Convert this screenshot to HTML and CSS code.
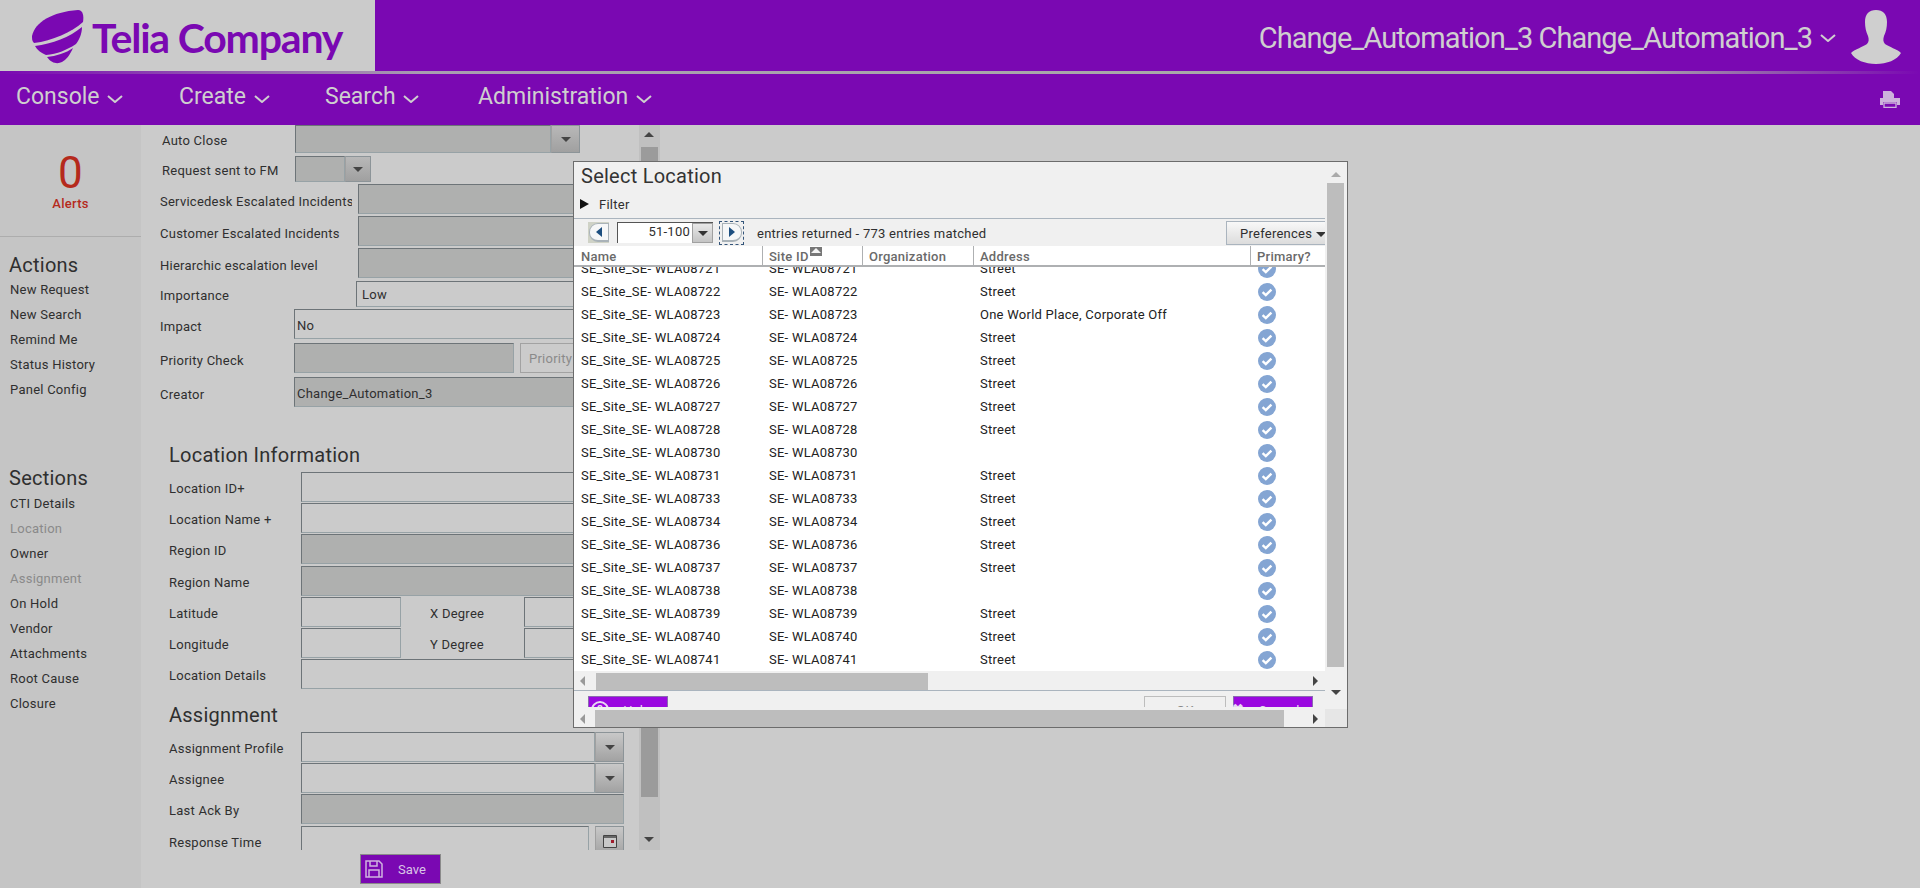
FILE: index.html
```html
<!DOCTYPE html>
<html lang="en">
<head>
    <meta charset="UTF-8">
    <title>Select Location</title>
    <link rel="stylesheet" href="styles.css">
</head>
<body>
<svg class="defs" aria-hidden="true">
    <symbol id="chevron" viewBox="0 0 16 8"><path d="M1 1l7 6 7-6" fill="none" stroke="currentColor" stroke-width="2"/></symbol>
    <symbol id="check" viewBox="0 0 18 18"><circle cx="9" cy="9" r="9" fill="#84a5d3"/><path d="M4.6 9.2l3.2 3 5.6-5.6" fill="none" stroke="#fff" stroke-width="2.4"/></symbol>
</svg>

<header class="topbar">
    <div class="logo">
        <svg class="logo-mark" viewBox="0 0 52 55">
            <path d="M0 26C3 12 20 2 46 0c5 0 6 6 5 12C40 22 20 31 2 33c-2-2-2-4-2-7z" fill="#7a08b2"/>
            <path d="M3 36c17-2 35-9 47-19 0 7-3 13-6 17-9 6-19 10-30 11-5-2-9-5-11-9z" fill="#7a08b2"/>
            <path d="M15 47c9-1 19-4 26-9-3 7-7 12-11 14-4 2-10 2-15-5z" fill="#7a08b2"/>
        </svg>
        <span class="logo-text">Telia Company</span>
    </div>
    <div class="user">
        <span class="user-name">Change_Automation_3 Change_Automation_3</span>
        <svg class="chevron-sm"><use href="#chevron"/></svg>
        <svg class="avatar" viewBox="0 0 50 54">
            <path d="M25 0c7 0 11 4 11 12 0 5-1 10-3 14-1 3-1 6 1 8 4 3 12 5 16 9-4 7-14 11-25 11S4 50 0 43c4-4 12-6 16-9 2-2 2-5 1-8-2-4-3-9-3-14C14 4 18 0 25 0z" fill="#cfcfcf"/>
        </svg>
    </div>
</header>
<div class="rule"></div>

<nav class="menu">
    <a class="menu-item console">Console <svg class="chevron"><use href="#chevron"/></svg></a>
    <a class="menu-item create">Create <svg class="chevron"><use href="#chevron"/></svg></a>
    <a class="menu-item search">Search <svg class="chevron"><use href="#chevron"/></svg></a>
    <a class="menu-item admin">Administration <svg class="chevron"><use href="#chevron"/></svg></a>
    <svg class="printer" viewBox="0 0 20 17">
        <path d="M3 0h8l3 3v4H3z" fill="#cdb3dc"/>
        <path d="M0 7h20v7h-3v-3H3v3H0z" fill="#cdb3dc"/>
        <path d="M4 12h12v4.500H4z" fill="none" stroke="#cdb3dc" stroke-width="1.300"/>
    </svg>
</nav>

<main class="content">
    <aside class="sidebar">
        <div class="alerts">
            <div class="alerts-count">0</div>
            <div class="alerts-label">Alerts</div>
        </div>
        <h2 class="side-title">Actions</h2>
        <ul class="side-list">
            <li>New Request</li>
            <li>New Search</li>
            <li>Remind Me</li>
            <li>Status History</li>
            <li>Panel Config</li>
        </ul>
        <h2 class="side-title sections">Sections</h2>
        <ul class="side-list">
            <li>CTI Details</li>
            <li class="off">Location</li>
            <li>Owner</li>
            <li class="off">Assignment</li>
            <li>On Hold</li>
            <li>Vendor</li>
            <li>Attachments</li>
            <li>Root Cause</li>
            <li>Closure</li>
        </ul>
    </aside>

    <section class="panel">
        <div class="form">
            <div class="row row-first">
                <label class="lbl lbl-close">Auto Close</label>
                <div class="field off"></div><div class="drop off-drop"><i></i></div>
            </div>
            <div class="row row-fm">
                <label class="lbl lbl-close">Request sent to FM</label>
                <div class="field off small"></div><div class="drop off-drop"><i></i></div>
            </div>
            <div class="row gap-2">
                <label class="lbl lbl-esc">Servicedesk Escalated Incidents</label>
                <div class="field off"></div>
            </div>
            <div class="row gap-2">
                <label class="lbl lbl-esc">Customer Escalated Incidents</label>
                <div class="field off"></div>
            </div>
            <div class="row gap-2">
                <label class="lbl lbl-esc">Hierarchic escalation level</label>
                <div class="field off"></div>
            </div>
            <div class="row row-low">
                <label class="lbl lbl-low">Importance</label>
                <div class="field">Low</div>
            </div>
            <div class="row gap-2">
                <label class="lbl lbl-close-b">Impact</label>
                <div class="field tight">No</div>
            </div>
            <div class="row gap-4">
                <label class="lbl lbl-close-b">Priority Check</label>
                <div class="field off prio"></div>
                <div class="prio-btn">Priority</div>
            </div>
            <div class="row gap-4">
                <label class="lbl lbl-close-b">Creator</label>
                <div class="field off tight">Change_Automation_3</div>
            </div>

            <h3 class="group group-loc">Location Information</h3>
            <div class="row block">
                <label class="lbl lbl-loc">Location ID+</label>
                <div class="field"></div>
            </div>
            <div class="row block gap-1">
                <label class="lbl lbl-loc">Location Name +</label>
                <div class="field"></div>
            </div>
            <div class="row block gap-1">
                <label class="lbl lbl-loc">Region ID</label>
                <div class="field off"></div>
            </div>
            <div class="row block gap-2">
                <label class="lbl lbl-loc">Region Name</label>
                <div class="field off"></div>
            </div>
            <div class="row block gap-1">
                <label class="lbl lbl-loc">Latitude</label>
                <div class="field coord"></div>
                <label class="lbl lbl-deg">X Degree</label>
                <div class="field"></div>
            </div>
            <div class="row block gap-1">
                <label class="lbl lbl-loc">Longitude</label>
                <div class="field coord"></div>
                <label class="lbl lbl-deg">Y Degree</label>
                <div class="field"></div>
            </div>
            <div class="row block gap-1">
                <label class="lbl lbl-loc">Location Details</label>
                <div class="field"></div>
            </div>

            <h3 class="group group-assign">Assignment</h3>
            <div class="row block wide">
                <label class="lbl lbl-loc">Assignment Profile</label>
                <div class="field"></div><div class="drop"><i></i></div>
            </div>
            <div class="row block wide gap-1">
                <label class="lbl lbl-loc">Assignee</label>
                <div class="field"></div><div class="drop"><i></i></div>
            </div>
            <div class="row block wide gap-1">
                <label class="lbl lbl-loc">Last Ack By</label>
                <div class="field off"></div>
            </div>
            <div class="row block wide gap-2">
                <label class="lbl lbl-loc">Response Time</label>
                <div class="field"></div>
                <div class="drop cal">
                    <svg viewBox="0 0 14 13" width="14" height="13">
                        <path d="M.5.5h13v12H.5z" fill="#c9c9c9" stroke="#444"/>
                        <path d="M1 1h12v2H1z" fill="#666"/>
                        <path d="M8 5h3v3H8z" fill="#a01c2c"/>
                    </svg>
                </div>
            </div>
        </div>
        <div class="form-scroll">
            <i class="up"></i>
            <div class="form-thumb"></div>
            <i class="down"></i>
        </div>
    </section>

    <button class="save">
        <svg viewBox="0 0 18 18" width="18" height="18">
            <path d="M1 1h13l3 3v13H1z" fill="none" stroke="#d0b3e0" stroke-width="1.500"/>
            <path d="M5 1v5h7V1M4 17v-7h10v7" fill="none" stroke="#d0b3e0" stroke-width="1.500"/>
        </svg>
        <span>Save</span>
    </button>
</main>

<!-- dialog lies over the form -->
<div class="dialog">
    <div class="dialog-body">
        <div class="dialog-title">Select Location</div>
        <div class="filter"><i class="arrow-right"></i>Filter</div>
        <div class="toolbar">
            <div class="page-btn prev"><span class="knob"><i class="tri-left"></i></span></div>
            <div class="page-select">
                <span class="page-value">51-100</span>
                <span class="page-drop"><i></i></span>
            </div>
            <div class="page-btn next"><span class="knob"><i class="tri-right"></i></span></div>
            <span class="count">entries returned - 773 entries matched</span>
            <div class="prefs">Preferences <i></i></div>
        </div>
        <div class="thead">
            <div class="th c-name">Name</div>
            <div class="th c-site">Site ID<i class="sort"></i></div>
            <div class="th c-org">Organization</div>
            <div class="th c-addr">Address</div>
            <div class="th c-prim">Primary?</div>
        </div>
        <div class="tlist">
            <div class="tscroll">
                <div class="tr"><span class="c-name">SE_Site_SE- WLA08721</span><span class="c-site">SE- WLA08721</span><span class="c-org"></span><span class="c-addr">Street</span><span class="c-prim"><svg class="ok"><use href="#check"/></svg></span></div>
                <div class="tr"><span class="c-name">SE_Site_SE- WLA08722</span><span class="c-site">SE- WLA08722</span><span class="c-org"></span><span class="c-addr">Street</span><span class="c-prim"><svg class="ok"><use href="#check"/></svg></span></div>
                <div class="tr"><span class="c-name">SE_Site_SE- WLA08723</span><span class="c-site">SE- WLA08723</span><span class="c-org"></span><span class="c-addr">One World Place, Corporate Off</span><span class="c-prim"><svg class="ok"><use href="#check"/></svg></span></div>
                <div class="tr"><span class="c-name">SE_Site_SE- WLA08724</span><span class="c-site">SE- WLA08724</span><span class="c-org"></span><span class="c-addr">Street</span><span class="c-prim"><svg class="ok"><use href="#check"/></svg></span></div>
                <div class="tr"><span class="c-name">SE_Site_SE- WLA08725</span><span class="c-site">SE- WLA08725</span><span class="c-org"></span><span class="c-addr">Street</span><span class="c-prim"><svg class="ok"><use href="#check"/></svg></span></div>
                <div class="tr"><span class="c-name">SE_Site_SE- WLA08726</span><span class="c-site">SE- WLA08726</span><span class="c-org"></span><span class="c-addr">Street</span><span class="c-prim"><svg class="ok"><use href="#check"/></svg></span></div>
                <div class="tr"><span class="c-name">SE_Site_SE- WLA08727</span><span class="c-site">SE- WLA08727</span><span class="c-org"></span><span class="c-addr">Street</span><span class="c-prim"><svg class="ok"><use href="#check"/></svg></span></div>
                <div class="tr"><span class="c-name">SE_Site_SE- WLA08728</span><span class="c-site">SE- WLA08728</span><span class="c-org"></span><span class="c-addr">Street</span><span class="c-prim"><svg class="ok"><use href="#check"/></svg></span></div>
                <div class="tr"><span class="c-name">SE_Site_SE- WLA08730</span><span class="c-site">SE- WLA08730</span><span class="c-org"></span><span class="c-addr"></span><span class="c-prim"><svg class="ok"><use href="#check"/></svg></span></div>
                <div class="tr"><span class="c-name">SE_Site_SE- WLA08731</span><span class="c-site">SE- WLA08731</span><span class="c-org"></span><span class="c-addr">Street</span><span class="c-prim"><svg class="ok"><use href="#check"/></svg></span></div>
                <div class="tr"><span class="c-name">SE_Site_SE- WLA08733</span><span class="c-site">SE- WLA08733</span><span class="c-org"></span><span class="c-addr">Street</span><span class="c-prim"><svg class="ok"><use href="#check"/></svg></span></div>
                <div class="tr"><span class="c-name">SE_Site_SE- WLA08734</span><span class="c-site">SE- WLA08734</span><span class="c-org"></span><span class="c-addr">Street</span><span class="c-prim"><svg class="ok"><use href="#check"/></svg></span></div>
                <div class="tr"><span class="c-name">SE_Site_SE- WLA08736</span><span class="c-site">SE- WLA08736</span><span class="c-org"></span><span class="c-addr">Street</span><span class="c-prim"><svg class="ok"><use href="#check"/></svg></span></div>
                <div class="tr"><span class="c-name">SE_Site_SE- WLA08737</span><span class="c-site">SE- WLA08737</span><span class="c-org"></span><span class="c-addr">Street</span><span class="c-prim"><svg class="ok"><use href="#check"/></svg></span></div>
                <div class="tr"><span class="c-name">SE_Site_SE- WLA08738</span><span class="c-site">SE- WLA08738</span><span class="c-org"></span><span class="c-addr"></span><span class="c-prim"><svg class="ok"><use href="#check"/></svg></span></div>
                <div class="tr"><span class="c-name">SE_Site_SE- WLA08739</span><span class="c-site">SE- WLA08739</span><span class="c-org"></span><span class="c-addr">Street</span><span class="c-prim"><svg class="ok"><use href="#check"/></svg></span></div>
                <div class="tr"><span class="c-name">SE_Site_SE- WLA08740</span><span class="c-site">SE- WLA08740</span><span class="c-org"></span><span class="c-addr">Street</span><span class="c-prim"><svg class="ok"><use href="#check"/></svg></span></div>
                <div class="tr"><span class="c-name">SE_Site_SE- WLA08741</span><span class="c-site">SE- WLA08741</span><span class="c-org"></span><span class="c-addr">Street</span><span class="c-prim"><svg class="ok"><use href="#check"/></svg></span></div>
            </div>
        </div>
        <div class="hscroll inner">
            <i class="sl"></i><div class="hthumb thumb-inner"></div><i class="sr"></i>
        </div>
        <div class="dialog-foot">
            <div class="foot-btn help"><b class="q">?</b>Help</div>
            <div class="foot-spacer"></div>
            <div class="foot-btn okay">OK</div>
            <div class="foot-btn cancel"><b class="x">&#10006;</b>Cancel</div>
        </div>
    </div>
    <div class="vscroll">
        <i class="vu"></i>
        <div class="vthumb"></div>
        <i class="vd"></i>
    </div>
    <div class="hscroll outer">
        <i class="sl"></i><div class="hthumb thumb-outer"></div><i class="sr"></i>
    </div>
    <div class="corner"></div>
</div>
</body>
</html>
```

FILE: styles.css
```css
html, body {
    margin: 0;
    padding: 0;
}

body {
    width: 1920px;
    height: 888px;
    overflow: hidden;
    position: relative;
    background-color: #cbcbcb;
    color: #2f2f2f;
    font-family: Roboto, "Liberation Sans", sans-serif;
    font-size: 13px;
    letter-spacing: 0.25px;
}

.defs {
    display: none;
}

/* header */

.topbar {
    height: 71px;
    display: flex;
    justify-content: space-between;
    background-color: #7a08b2;
}

.logo {
    width: 375px;
    display: flex;
    align-items: center;
    padding-left: 32px;
    box-sizing: border-box;
    background-color: #cbcbcb;
}

.logo-mark {
    width: 52px;
    height: 55px;
    flex: none;
    margin-top: 3px;
}

.logo-text {
    margin: 4px 0 0 8px;
    color: #7a08b2;
    font-family: Lato, sans-serif;
    font-size: 41px;
    font-weight: 700;
    letter-spacing: -1.2px;
    line-height: 1;
    white-space: nowrap;
}

.user {
    display: flex;
    align-items: center;
    padding-right: 19px;
    color: #cfcfcf;
}

.user-name {
    margin-top: 5px;
    font-size: 29px;
    letter-spacing: -0.95px;
}

.chevron-sm {
    width: 16px;
    height: 8px;
    margin: 4px 0 0 8px;
}

.avatar {
    width: 50px;
    height: 54px;
    margin: 2px 0 0 15px;
}

.rule {
    height: 3px;
    background: linear-gradient(to right, #7a08b2 0, #a89db0 22%, #a8a8a8 60%, #a8a8a8 85%, #7a08b2 100%);
}

.menu {
    height: 51px;
    display: flex;
    align-items: center;
    position: relative;
    background-color: #7a08b2;
    color: #cfcfcf;
    letter-spacing: 0;
}

.menu-item {
    margin-bottom: 6px;
    font-size: 23px;
    white-space: nowrap;
}

.console { margin-left: 16px; width: 163px; }
.create { width: 146px; }
.search { width: 153px; }

.chevron {
    width: 16px;
    height: 8px;
    margin-left: 2px;
    vertical-align: 1px;
}

.printer {
    width: 20px;
    height: 17px;
    margin-left: auto;
    margin-right: 20px;
}

/* left side */

.content {
    height: 763px;
    display: flex;
    position: relative;
}

.sidebar {
    width: 141px;
    flex: none;
    background-color: #c5c5c5;
}

.alerts {
    height: 112px;
    border-bottom: 1px solid #adadad;
    text-align: center;
    box-sizing: border-box;
}

.alerts-count {
    padding-top: 23px;
    color: #b52a1c;
    font-size: 44px;
    line-height: 50px;
}

.alerts-label {
    margin-top: -2px;
    color: #b52a1c;
    font-size: 13px;
    font-weight: 500;
    line-height: 16px;
}

.side-title {
    margin: 16px 0 0 9px;
    font-size: 20px;
    font-weight: 400;
    line-height: 24px;
}

.sections {
    margin-top: 64px;
    margin-bottom: 1px;
}

.side-list {
    list-style: none;
    margin: 0;
    padding: 0 0 0 10px;
}

.side-list li {
    height: 25px;
    line-height: 25px;
}

.side-list li.off {
    color: #8a8a8a;
}

/* form */

.panel {
    width: 519px;
    height: 725px;
    display: flex;
    flex: none;
    overflow: hidden;
}

.form {
    width: 498px;
    flex: none;
    padding-left: 19px;
    box-sizing: border-box;
}

.row {
    height: 30px;
    display: flex;
    width: 420px;
}

.row-first { height: 28px; }
.row-fm { height: 26px; margin-top: 3px; width: 211px; }
.row-fm .drop { width: 26px; }
.row-low { height: 26px; margin-top: 3px; }
.gap-1 { margin-top: 1px; }
.gap-2 { margin-top: 2px; }
.gap-4 { margin-top: 4px; }

.block {
    margin-left: 9px;
    width: 411px;
}

.block.wide {
    width: 455px;
}

.lbl {
    flex: none;
    box-sizing: border-box;
    padding-top: 3px;
    line-height: 30px;
    white-space: nowrap;
    overflow: hidden;
}

.block .lbl { padding-top: 2px; }
.row-first .lbl { padding-top: 0; line-height: 32px; }
.row-fm .lbl { padding-top: 2px; line-height: 26px; }
.row-low .lbl { padding-top: 1px; line-height: 28px; }
.lbl-close { width: 133px; margin-left: 2px; }
.lbl-esc { width: 192px; margin-right: 6px; }
.lbl-low { width: 196px; }
.lbl-close-b { width: 134px; }
.lbl-loc { width: 132px; }
.lbl-deg { width: 123px; padding-left: 29px; }

.field {
    flex: 1;
    min-width: 0;
    box-sizing: border-box;
    padding-left: 5px;
    border: 1px solid;
    border-color: #6d7478 #97a2a6 #97a2a6 #6d7478;
    line-height: 32px;
    white-space: nowrap;
}

.row-low .field { line-height: 26px; }
.field.off { background-color: #afb0af; }
.field.tight { padding-left: 2px; }
.field.small { flex: none; width: 50px; }
.field.prio { flex: none; width: 220px; }
.field.coord { flex: none; width: 100px; }

.drop {
    width: 29px;
    flex: none;
    display: flex;
    align-items: center;
    justify-content: center;
    box-sizing: border-box;
    border: 1px solid #8c9498;
    border-left-color: #a0a0a0;
    background: linear-gradient(#c8c8c8, #a2a2a2);
}

.off-drop {
    background: linear-gradient(#b8b8b8, #a0a0a0);
}

.drop i {
    border: 5px solid transparent;
    border-top: 5px solid #444;
    border-bottom: 0;
}

.cal {
    margin-left: 6px;
}

.prio-btn {
    width: 90px;
    flex: none;
    margin-left: 6px;
    padding-left: 8px;
    box-sizing: border-box;
    border: 1px solid #a2a2a2;
    color: #8a8a8a;
    line-height: 30px;
}

.group {
    margin: 0 0 0 9px;
    font-size: 20px;
    font-weight: 400;
    line-height: 24px;
}

.group-loc { padding-top: 36px; padding-bottom: 5px; }
.group-assign { padding-top: 14px; padding-bottom: 5px; }

.form-scroll {
    width: 21px;
    position: relative;
    background-color: #c0c0c0;
}

.form-thumb {
    position: absolute;
    left: 2px;
    right: 2px;
    top: 22px;
    height: 650px;
    background-color: #9b9b9b;
}

.form-scroll .up,
.form-scroll .down {
    position: absolute;
    left: 5px;
    border: 5px solid transparent;
}

.form-scroll .up { top: 7px; border-bottom-color: #444; border-top: 0; }
.form-scroll .down { bottom: 8px; border-top-color: #444; border-bottom: 0; }

.save {
    position: absolute;
    left: 360px;
    top: 729px;
    width: 81px;
    height: 30px;
    display: flex;
    align-items: center;
    padding: 0 0 0 4px;
    border: 1px solid #8a8a8a;
    background-color: #7a08b2;
    color: #d9c6e6;
    font-family: Roboto, sans-serif;
    font-size: 13px;
}

.save span {
    margin-left: 15px;
}

/* dialog */

.dialog {
    position: absolute;
    left: 573px;
    top: 161px;
    width: 775px;
    height: 567px;
    display: grid;
    grid-template-columns: 751px 22px;
    grid-template-rows: 547px 18px;
    box-sizing: border-box;
    border: 1px solid #6c6c6c;
    background-color: #f0f0f0;
}

.dialog-body {
    overflow: hidden;
}

.dialog-title {
    height: 28px;
    padding-left: 7px;
    color: #333;
    font-size: 20px;
    line-height: 29px;
}

.filter {
    height: 28px;
    display: flex;
    align-items: center;
    padding-left: 6px;
    box-sizing: border-box;
}

.arrow-right {
    margin-right: 10px;
    border: 5px solid transparent;
    border-left: 9px solid #111;
    border-right: 0;
}

.toolbar {
    height: 28px;
    display: flex;
    align-items: center;
    position: relative;
    box-sizing: border-box;
    padding-left: 14px;
    border-top: 1px solid #aab4be;
}

.page-btn {
    width: 21px;
    height: 21px;
    display: flex;
    align-items: center;
    justify-content: center;
    box-sizing: border-box;
}

.prev {
    background-color: #cfd2c6;
}

.knob {
    width: 20px;
    height: 19px;
    display: flex;
    align-items: center;
    justify-content: center;
    box-sizing: border-box;
    border: 1px solid #a9b2b8;
    border-bottom-width: 2px;
    border-radius: 0 9px 9px 0;
    background-color: #f6f7f8;
}

.prev .knob {
    border-radius: 9px 0 0 9px;
}

.page-btn.next {
    width: 25px;
    height: 24px;
    margin-left: 6px;
    border: 1px dashed #34557a;
}

.tri-left,
.tri-right {
    border: 5px solid transparent;
}

.tri-left { border-right: 6px solid #1d4f80; border-left: 0; }
.tri-right { border-left: 6px solid #1d4f80; border-right: 0; }

.page-select {
    width: 96px;
    height: 21px;
    display: flex;
    margin-left: 8px;
    box-sizing: border-box;
    border-top: 1px solid #555;
    border-left: 1px solid #555;
    background-color: #fff;
}

.page-value {
    flex: 1;
    text-align: right;
    padding-right: 2px;
    line-height: 18px;
}

.page-drop {
    width: 21px;
    display: flex;
    align-items: center;
    justify-content: center;
    background: linear-gradient(#e8e8e8, #c4c4c4);
    border: 1px solid #a0a0a0;
    box-sizing: border-box;
}

.page-drop i {
    border: 5px solid transparent;
    border-top: 5px solid #333;
    border-bottom: 0;
}

.count {
    margin: 2px 0 0 13px;
}

.prefs {
    width: 99px;
    height: 24px;
    margin-left: auto;
    box-sizing: border-box;
    padding-left: 13px;
    border: 1px solid #aab4be;
    border-right: 0;
    background: linear-gradient(#f8f8f8, #dcdcdc);
    line-height: 24px;
    white-space: nowrap;
    overflow: hidden;
}

.prefs i {
    display: inline-block;
    border: 5px solid transparent;
    border-top: 5px solid #333;
    border-bottom: 0;
    vertical-align: middle;
}

.thead {
    height: 21px;
    display: flex;
    box-sizing: border-box;
    border-bottom: 2px solid #aeb0b2;
    background-color: #fff;
}

.th {
    position: relative;
    color: #6a6a6a;
    font-size: 13px;
    font-weight: 500;
    line-height: 22px;
    box-sizing: border-box;
    padding-left: 6px;
    border-right: 1px solid #aeb0b2;
}

.th:last-child { border-right: 0; }

.th.c-name { padding-left: 7px; }

.sort {
    position: absolute;
    top: 1px;
    left: 47px;
    width: 12px;
    height: 9px;
    background-color: #777;
}

.sort::after {
    content: "";
    position: absolute;
    left: 1px;
    top: 1px;
    border: 5px solid transparent;
    border-bottom: 5px solid #f4f4f4;
    border-top: 0;
}

.c-name { width: 189px; flex: none; }
.c-site { width: 100px; flex: none; }
.c-org { width: 111px; flex: none; }
.c-addr { width: 277px; flex: none; }
.c-prim { width: 74px; flex: none; }

.tlist {
    height: 404px;
    overflow: hidden;
    background-color: #fff;
}

.tscroll {
    margin-top: -10px;
}

.tr {
    height: 23px;
    display: flex;
    align-items: center;
    color: #222;
    white-space: nowrap;
}

.tr .c-name { padding-left: 7px; box-sizing: border-box; }
.tr .c-site { padding-left: 6px; box-sizing: border-box; }
.tr .c-addr { padding-left: 6px; box-sizing: border-box; }
.tr .c-prim { padding-left: 7px; box-sizing: border-box; display: flex; }

.ok {
    width: 18px;
    height: 18px;
}

.hscroll {
    display: flex;
    align-items: flex-end;
    position: relative;
    box-sizing: border-box;
}

.hscroll .sl,
.hscroll .sr {
    position: absolute;
    top: 5px;
    border: 5px solid transparent;
}

.sl { left: 6px; border-right: 5px solid #999 !important; border-left: 0 !important; }
.sr { right: 7px; border-left: 5px solid #444 !important; border-right: 0 !important; }

.hthumb {
    height: 17px;
    background-color: #bdbdbd;
}

.hscroll.inner {
    height: 19px;
    border-bottom: 0;
}

.hscroll.outer {
    height: 18px;
    grid-column: 1;
    grid-row: 2;
}

.thumb-inner { width: 332px; margin-left: 22px; }
.thumb-outer { width: 689px; margin-left: 21px; }

/* only the top of these buttons shows, the dialog body is scrolled */
.dialog-foot {
    display: flex;
    align-items: flex-start;
    height: 17px;
    overflow: hidden;
    padding: 5px 12px 0 14px;
    box-sizing: border-box;
    border-top: 1px solid #aab4be;
}

.foot-btn {
    width: 80px;
    height: 30px;
    flex: none;
    display: flex;
    justify-content: center;
    padding-top: 6px;
    box-sizing: border-box;
    line-height: 16px;
    color: #e8d8f2;
    background-color: #9a08e0;
    border: 1px solid #8a6ab0;
}

.foot-spacer { flex: 1; }

.okay {
    width: 82px;
    margin-right: 7px;
    background-color: #f0f0f0;
    border-color: #bdbdbd;
    color: #888;
}

.q {
    width: 14px;
    height: 14px;
    margin: -2px 14px 0 -14px;
    border: 2px solid #e8d8f2;
    border-radius: 50%;
    text-align: center;
    line-height: 14px;
    font-size: 11px;
}

.x {
    margin: -2px 14px 0 -14px;
    font-size: 14px;
}

.vscroll {
    position: relative;
    grid-column: 2;
    grid-row: 1;
}

.vthumb {
    position: absolute;
    left: 2px;
    right: 3px;
    top: 21px;
    height: 484px;
    background-color: #bdbdbd;
}

.vu,
.vd {
    position: absolute;
    left: 6px;
    border: 5px solid transparent;
}

.vu { top: 10px; border-bottom-color: #aaa; border-top: 0; }
.vd { top: 528px; border-top-color: #444; border-bottom: 0; }

.corner {
    grid-column: 2;
    grid-row: 2;
    background-color: #e6e6e6;
}
```
